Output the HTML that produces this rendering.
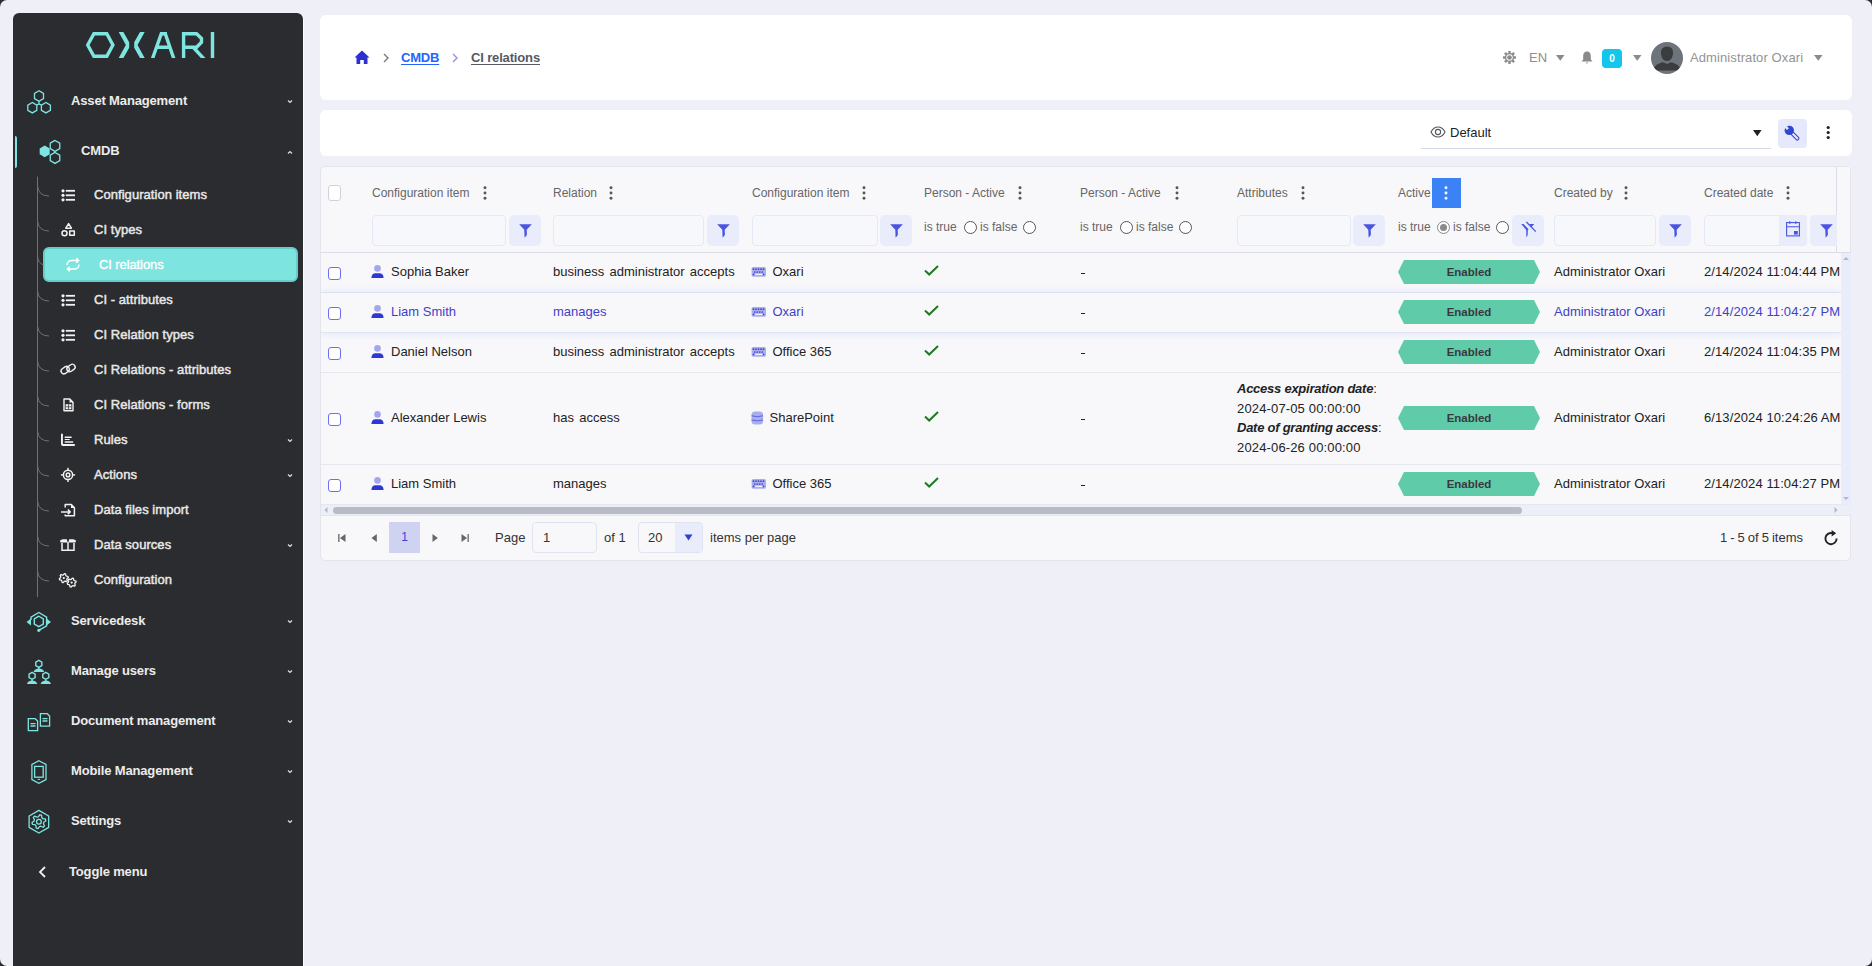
<!DOCTYPE html>
<html><head><meta charset="utf-8">
<style>
*{box-sizing:border-box;margin:0;padding:0}
html,body{width:1872px;height:966px;overflow:hidden;background:#2b2c2f}
body{font-family:"Liberation Sans",sans-serif;font-size:13px;color:#222;position:relative}
.page{position:absolute;left:0;top:0;width:1872px;height:966px;background:#eeeff7;border-radius:7px;overflow:hidden}
.a{position:absolute;white-space:nowrap}
.t{position:absolute;white-space:nowrap;line-height:16px;height:16px}
.sb{position:absolute;left:13px;top:13px;width:290px;height:960px;background:#2b2c2f;border-radius:6px;box-shadow:1px 0 0 #fbfbfe}
.mi{position:absolute;font-weight:bold;color:#ececec;font-size:13px;letter-spacing:-0.15px;line-height:16px;white-space:nowrap}
.si{position:absolute;font-weight:bold;color:#e8e8e8;font-size:13px;letter-spacing:-0.45px;line-height:16px;white-space:nowrap}
.card{position:absolute;background:#fff;border-radius:6px}

</style></head><body>
<div class="page">
<div class="sb"></div>
<div class="a" style="left:15px;top:136px;width:2.3px;height:32px;background:#7ee5e1;border-radius:0 2px 2px 0"></div>

<div class="a" style="left:43px;top:247px;width:255px;height:35px;background:#7ee4e0;border:2px solid #68cbc7;border-radius:6px"></div>
<div class="mi" style="left:71px;top:93px">Asset Management</div>
<div class="mi" style="left:71px;top:613px">Servicedesk</div>
<div class="mi" style="left:71px;top:663px">Manage users</div>
<div class="mi" style="left:71px;top:713px">Document management</div>
<div class="mi" style="left:71px;top:763px">Mobile Management</div>
<div class="mi" style="left:71px;top:813px">Settings</div>
<div class="mi" style="left:81px;top:143px">CMDB</div>
<div class="mi" style="left:69px;top:864px">Toggle menu</div>
<div class="si" style="left:94px;top:187px;color:#e8e8e8;font-weight:normal;-webkit-text-stroke:0.45px currentColor;letter-spacing:0.05px">Configuration items</div>
<div class="si" style="left:94px;top:222px;color:#e8e8e8;font-weight:normal;-webkit-text-stroke:0.45px currentColor;letter-spacing:0.05px">CI types</div>
<div class="si" style="left:99px;top:257px;color:#ffffff;font-weight:normal;-webkit-text-stroke:0.35px currentColor;letter-spacing:-0.1px">CI relations</div>
<div class="si" style="left:94px;top:292px;color:#e8e8e8;font-weight:normal;-webkit-text-stroke:0.45px currentColor;letter-spacing:0.05px">CI - attributes</div>
<div class="si" style="left:94px;top:327px;color:#e8e8e8;font-weight:normal;-webkit-text-stroke:0.45px currentColor;letter-spacing:0.05px">CI Relation types</div>
<div class="si" style="left:94px;top:362px;color:#e8e8e8;font-weight:normal;-webkit-text-stroke:0.45px currentColor;letter-spacing:0.05px">CI Relations - attributes</div>
<div class="si" style="left:94px;top:397px;color:#e8e8e8;font-weight:normal;-webkit-text-stroke:0.45px currentColor;letter-spacing:0.05px">CI Relations - forms</div>
<div class="si" style="left:94px;top:432px;color:#e8e8e8;font-weight:normal;-webkit-text-stroke:0.45px currentColor;letter-spacing:0.05px">Rules</div>
<div class="si" style="left:94px;top:467px;color:#e8e8e8;font-weight:normal;-webkit-text-stroke:0.45px currentColor;letter-spacing:0.05px">Actions</div>
<div class="si" style="left:94px;top:502px;color:#e8e8e8;font-weight:normal;-webkit-text-stroke:0.45px currentColor;letter-spacing:0.05px">Data files import</div>
<div class="si" style="left:94px;top:537px;color:#e8e8e8;font-weight:normal;-webkit-text-stroke:0.45px currentColor;letter-spacing:0.05px">Data sources</div>
<div class="si" style="left:94px;top:572px;color:#e8e8e8;font-weight:normal;-webkit-text-stroke:0.45px currentColor;letter-spacing:0.05px">Configuration</div>
<svg class="a" style="left:0;top:0" width="320" height="966" viewBox="0 0 320 966"><defs><clipPath id="lc"><rect x="80" y="32" width="140" height="26"/></clipPath></defs><g clip-path="url(#lc)"><g stroke="#7ee5e1" stroke-width="3.4" fill="none"><polygon points="87.7,45 93.9,33.7 106.8,33.7 112.9,45 106.8,56.3 93.9,56.3"/><path d="M152,60 L162.6,30 M164,30 L174.3,60 M155.5,47.2 H171"/><path d="M160,33.7 H167" /><path d="M183.6,60 V33.7 H196.6 L201.5,38.4 V42.2 L196.6,47.2 H183.6 M192.5,46.5 L205,60"/><path d="M212.5,30 V60"/></g><g fill="#7ee5e1"><polygon points="118.7,32 123.4,32 129.2,42.3 129.2,47.7 123.4,58 118.7,58 125.85,45"/><polygon points="144.7,32 140,32 134.2,42.3 134.2,47.7 140,58 144.7,58 137.55,45"/></g></g><g stroke="#7ee5e1" stroke-width="1.3" fill="none"><polygon points="39.00,90.80 34.50,93.40 34.50,98.60 39.00,101.20 43.50,98.60 43.50,93.40"/><polygon points="32.30,102.50 27.80,105.10 27.80,110.30 32.30,112.90 36.80,110.30 36.80,105.10"/><polygon points="45.90,102.50 41.40,105.10 41.40,110.30 45.90,112.90 50.40,110.30 50.40,105.10"/><path d="M39,101.2 V104 M36.8,105 Q39,103.4 41.2,105"/></g><polygon points="44.70,145.60 39.68,148.50 39.68,154.30 44.70,157.20 49.72,154.30 49.72,148.50" fill="#7ee5e1"/><g stroke="#7ee5e1" stroke-width="1.3" fill="none"><polygon points="55.00,140.40 50.24,143.15 50.24,148.65 55.00,151.40 59.76,148.65 59.76,143.15"/><polygon points="55.00,152.40 50.24,155.15 50.24,160.65 55.00,163.40 59.76,160.65 59.76,155.15"/></g><path d="M37.5,176.5 V597 M37.5,186 Q38.5,196 49,196 M37.5,221 Q38.5,231 49,231 M37.5,256 Q38,263 43.5,265 M37.5,291 Q38.5,301 49,301 M37.5,326 Q38.5,336 49,336 M37.5,361 Q38.5,371 49,371 M37.5,396 Q38.5,406 49,406 M37.5,431 Q38.5,441 49,441 M37.5,466 Q38.5,476 49,476 M37.5,501 Q38.5,511 49,511 M37.5,536 Q38.5,546 49,546 M37.5,571 Q38.5,581 49,581" stroke="#707173" stroke-width="1" fill="none"/><path d="M288,100.5 L290,102.5 L292,100.5 M288,439.5 L290,441.5 L292,439.5 M288,474.5 L290,476.5 L292,474.5 M288,544.5 L290,546.5 L292,544.5 M288,620.5 L290,622.5 L292,620.5 M288,670.5 L290,672.5 L292,670.5 M288,720.5 L290,722.5 L292,720.5 M288,770.5 L290,772.5 L292,770.5 M288,820.5 L290,822.5 L292,820.5 M288,153.5 L290,151.5 L292,153.5" stroke="#e0e0e0" stroke-width="1.2" fill="none"/><path d="M45,867 L40,872 L45,877" stroke="#f0f0f0" stroke-width="1.8" fill="none"/><circle cx="63" cy="190.8" r="1.6" fill="#f2f2f2"/><rect x="65.8" y="189.9" width="9.2" height="1.8" fill="#f2f2f2"/><circle cx="63" cy="195.3" r="1.6" fill="#f2f2f2"/><rect x="65.8" y="194.4" width="9.2" height="1.8" fill="#f2f2f2"/><circle cx="63" cy="199.8" r="1.6" fill="#f2f2f2"/><rect x="65.8" y="198.9" width="9.2" height="1.8" fill="#f2f2f2"/><circle cx="63" cy="295.8" r="1.6" fill="#f2f2f2"/><rect x="65.8" y="294.90000000000003" width="9.2" height="1.8" fill="#f2f2f2"/><circle cx="63" cy="300.3" r="1.6" fill="#f2f2f2"/><rect x="65.8" y="299.40000000000003" width="9.2" height="1.8" fill="#f2f2f2"/><circle cx="63" cy="304.8" r="1.6" fill="#f2f2f2"/><rect x="65.8" y="303.90000000000003" width="9.2" height="1.8" fill="#f2f2f2"/><circle cx="63" cy="330.8" r="1.6" fill="#f2f2f2"/><rect x="65.8" y="329.90000000000003" width="9.2" height="1.8" fill="#f2f2f2"/><circle cx="63" cy="335.3" r="1.6" fill="#f2f2f2"/><rect x="65.8" y="334.40000000000003" width="9.2" height="1.8" fill="#f2f2f2"/><circle cx="63" cy="339.8" r="1.6" fill="#f2f2f2"/><rect x="65.8" y="338.90000000000003" width="9.2" height="1.8" fill="#f2f2f2"/><g stroke="#f2f2f2" stroke-width="1.5" fill="none" stroke-linejoin="round"><path d="M68.6,223.6 L71.4,228.2 H65.8 Z"/><circle cx="64.5" cy="233.3" r="2.5"/><rect x="69.7" y="231" width="4.6" height="4.3"/></g><g stroke="#ffffff" stroke-width="1.5" fill="none"><path d="M67,265 A4.6,4.6 0 0 1 71.6,260.6 H78.5 M76.3,258.4 L78.6,260.6 L76.3,262.8"/><path d="M79,264.5 A4.6,4.6 0 0 1 74.4,269 H67.5 M69.7,266.8 L67.4,269 L69.7,271.2"/></g><g stroke="#f2f2f2" stroke-width="1.4" fill="none"><rect x="60.8" y="367.3" width="8.8" height="5.6" rx="2.8" transform="rotate(-35 65.2 370.1)"/><rect x="66.6" y="365.2" width="8.8" height="5.6" rx="2.8" transform="rotate(-35 71 368)"/></g><g stroke="#f2f2f2" stroke-width="1.4" fill="none" stroke-linejoin="round"><path d="M64,399 H69.8 L73,402.2 V410.8 H64 Z"/></g><g fill="#f2f2f2"><path d="M69.5,398.5 V402.5 H73.5 Z"/><rect x="65.6" y="404.3" width="5.8" height="5" rx="0.3"/></g><g stroke="#2b2c2f" stroke-width="0.7"><path d="M65.6,406.8 H71.4 M68.5,404.3 V409.3"/></g><g fill="#f2f2f2"><path d="M61,433.7 H62.9 V443.4 Q62.9,444 63.5,444 H74.8 V445.9 H63 Q61,445.9 61,444 Z"/><rect x="64.6" y="436.5" width="7.1" height="1.4" rx="0.5"/><rect x="64.6" y="438.9" width="5.2" height="1.2" rx="0.5"/><rect x="64.6" y="441.3" width="8.6" height="1.4" rx="0.5"/></g><g stroke="#f2f2f2" stroke-width="1.5" fill="none"><circle cx="68" cy="474.9" r="4.6"/><circle cx="68" cy="474.9" r="1.8"/></g><g fill="#f2f2f2"><rect x="67.3" y="467.8" width="1.4" height="2.6"/><rect x="67.3" y="479.4" width="1.4" height="2.6"/><rect x="60.9" y="474.2" width="2.6" height="1.4"/><rect x="72.5" y="474.2" width="2.6" height="1.4"/></g><g stroke="#f2f2f2" stroke-width="1.5" fill="none" stroke-linejoin="round"><path d="M65.2,507.5 V504.6 H71.3 L74.4,507.7 V515.8 H65.2 V514.5"/><path d="M61,511.9 H70.2 M67.8,509.5 L70.2,511.9 L67.8,514.3"/></g><path d="M71,504.2 V508 H74.8 Z" fill="#f2f2f2"/><g fill="#f2f2f2"><path d="M60,540.6 L62.5,539.2 H66.8 L67.6,542.5 H60.5 Z"/><path d="M76,540.6 L73.5,539.2 H69.2 L68.4,542.5 H75.5 Z"/></g><g stroke="#f2f2f2" stroke-width="1.5" fill="none"><path d="M62,543 V550.3 H74 V543"/><path d="M68,542 V550.5"/></g><g stroke="#f2f2f2" stroke-width="1.3" fill="none" stroke-linejoin="round"><polygon points="64.39,573.64 65.52,573.94 65.81,575.48 66.42,576.09 67.96,576.38 68.26,577.51 67.07,578.53 66.85,579.36 67.37,580.84 66.54,581.67 65.06,581.15 64.23,581.37 63.21,582.56 62.08,582.26 61.79,580.72 61.18,580.11 59.64,579.82 59.34,578.69 60.53,577.67 60.75,576.84 60.23,575.36 61.06,574.53 62.54,575.05 63.37,574.83"/><polygon points="72.29,578.14 73.42,578.44 73.71,579.98 74.32,580.59 75.86,580.88 76.16,582.01 74.97,583.03 74.75,583.86 75.27,585.34 74.44,586.17 72.96,585.65 72.13,585.87 71.11,587.06 69.98,586.76 69.69,585.22 69.08,584.61 67.54,584.32 67.24,583.19 68.43,582.17 68.65,581.34 68.13,579.86 68.96,579.03 70.44,579.55 71.27,579.33"/></g><g fill="#f2f2f2"><circle cx="63.8" cy="578.1" r="1.1"/><circle cx="71.7" cy="582.6" r="1.1"/></g><g stroke="#7ee5e1" stroke-width="1.4" fill="none"><path d="M31,620 V617.2 L38.8,612.5 L46.6,617.2 V625.8 L38.8,630.3"/><polygon points="38.80,616.20 34.30,618.80 34.30,624.00 38.80,626.60 43.30,624.00 43.30,618.80"/></g><g fill="#7ee5e1"><path d="M26.5,622 L31,618.5 V625.5 Z"/><path d="M51,622 L46.5,618.5 V625.5 Z"/><circle cx="38.8" cy="630.3" r="1.6"/></g><g stroke="#7ee5e1" stroke-width="1.4" fill="none"><polygon points="38.80,660.40 35.77,662.15 35.77,665.65 38.80,667.40 41.83,665.65 41.83,662.15"/><polygon points="32.10,672.30 29.07,674.05 29.07,677.55 32.10,679.30 35.13,677.55 35.13,674.05"/><polygon points="45.80,672.30 42.77,674.05 42.77,677.55 45.80,679.30 48.83,677.55 48.83,674.05"/><path d="M38.8,667.4 V669 M32.1,679.3 V681 M45.8,679.3 V681"/></g><g fill="#7ee5e1"><path d="M33.60,672 C34.40,669.4 36.90,668.6 38.90,668.6 C40.90,668.6 43.40,669.4 44.20,672 Z"/><path d="M26.90,684 C27.70,681.4 30.10,680.6 32.10,680.6 C34.10,680.6 36.50,681.4 37.30,684 Z"/><path d="M40.60,684 C41.40,681.4 43.80,680.6 45.80,680.6 C47.80,680.6 50.20,681.4 51.00,684 Z"/></g><g stroke="#7ee5e1" stroke-width="1.3" fill="none"><path d="M28.3,718.7 H35.3 L37.6,721 V730.6 H28.3 Z"/><path d="M40.4,713.7 H47.3 L49.6,716 V726.2 H40.4 Z"/><path d="M30.5,723.6 H35.5 M30.5,726 H35.5 M42.5,718.6 H47.5 M42.5,721 H47.5"/></g><g stroke="#7ee5e1" stroke-width="1.3" fill="none"><path d="M38.9,760.7 L46,764.5 V779.5 L38.9,783.3 L31.9,779.5 V764.5 Z"/><rect x="34.6" y="766.4" width="8.6" height="10.8"/></g><rect x="37.7" y="778.9" width="2.4" height="1" fill="#7ee5e1"/><g stroke="#7ee5e1" stroke-width="1.3" fill="none" stroke-linejoin="round"><polygon points="38.90,810.40 29.11,816.05 29.11,827.35 38.90,833.00 48.69,827.35 48.69,816.05"/><polygon points="39.81,814.76 41.58,815.23 41.88,817.81 42.79,818.72 45.37,819.02 45.84,820.79 43.76,822.34 43.43,823.58 44.45,825.96 43.16,827.25 40.78,826.23 39.54,826.56 37.99,828.64 36.22,828.17 35.92,825.59 35.01,824.68 32.43,824.38 31.96,822.61 34.04,821.06 34.37,819.82 33.35,817.44 34.64,816.15 37.02,817.17 38.26,816.84"/><circle cx="38.9" cy="821.7" r="2.4"/></g></svg>
<div class="card" style="left:320px;top:15px;width:1532px;height:85px"></div>
<svg class="a" style="left:354px;top:50px" width="16" height="15" viewBox="0 0 16 15"><path d="M8,0.5 L15.5,7.5 H13.5 V14 H9.8 V10 H6.2 V14 H2.5 V7.5 H0.5 Z" fill="#2d2fcf"/></svg>
<svg class="a" style="left:382px;top:53px" width="8" height="10"><path d="M2,1 L6,5 L2,9" stroke="#7a7a7a" stroke-width="1.4" fill="none"/></svg>
<div class="t" style="left:401px;top:50px;font-weight:bold;color:#2563ff;text-decoration:underline;text-underline-offset:2px;letter-spacing:-0.2px">CMDB</div>
<svg class="a" style="left:451px;top:53px" width="8" height="10"><path d="M2,1 L6,5 L2,9" stroke="#9090ee" stroke-width="1.4" fill="none"/></svg>
<div class="t" style="left:471px;top:50px;font-weight:bold;color:#555a66;text-decoration:underline;text-underline-offset:2px;letter-spacing:-0.15px">CI relations</div>
<svg class="a" style="left:1503px;top:50.5px" width="13" height="13" viewBox="0 0 13 13"><g fill="#8a8a8a"><rect x="5.3" y="0" width="2.4" height="3" transform="rotate(0 6.5 6.5)"/><rect x="5.3" y="0" width="2.4" height="3" transform="rotate(45 6.5 6.5)"/><rect x="5.3" y="0" width="2.4" height="3" transform="rotate(90 6.5 6.5)"/><rect x="5.3" y="0" width="2.4" height="3" transform="rotate(135 6.5 6.5)"/><rect x="5.3" y="0" width="2.4" height="3" transform="rotate(180 6.5 6.5)"/><rect x="5.3" y="0" width="2.4" height="3" transform="rotate(225 6.5 6.5)"/><rect x="5.3" y="0" width="2.4" height="3" transform="rotate(270 6.5 6.5)"/><rect x="5.3" y="0" width="2.4" height="3" transform="rotate(315 6.5 6.5)"/><circle cx="6.5" cy="6.5" r="4.6"/></g><circle cx="6.5" cy="6.5" r="3.2" fill="#fff"/><circle cx="6.5" cy="6.5" r="2.3" fill="#8a8a8a"/></svg>
<div class="t" style="left:1529px;top:50px;color:#8d8d8d;font-size:13px">EN</div>
<svg class="a" style="left:1556px;top:55px" width="9" height="6"><path d="M0,0 H8.5 L4.25,5.8 Z" fill="#8a8a8a"/></svg>
<svg class="a" style="left:1581px;top:51px" width="12" height="13" viewBox="0 0 12 13"><path d="M6,0.5 C9,0.5 9.8,3 9.8,5.5 V8.5 L11.5,10.5 H0.5 L2.2,8.5 V5.5 C2.2,3 3,0.5 6,0.5 Z" fill="#8a8a8a"/><path d="M4.5,11.5 H7.5 L6,12.8 Z" fill="#8a8a8a"/></svg>
<div class="a" style="left:1602px;top:49px;width:20px;height:19px;background:#13c6ea;border-radius:4px;color:#fff;font-weight:bold;font-size:10px;line-height:19px;text-align:center">0</div>
<svg class="a" style="left:1632.5px;top:55px" width="9" height="6"><path d="M0,0 H8.5 L4.25,5.8 Z" fill="#8a8a8a"/></svg>
<svg class="a" style="left:1651px;top:42px" width="32" height="32" viewBox="0 0 32 32"><defs><clipPath id="av"><circle cx="16" cy="16" r="16"/></clipPath></defs><circle cx="16" cy="16" r="16" fill="#6e747c"/><g clip-path="url(#av)" fill="#3b3c3e"><path d="M16,4.5 C20.5,4.5 22.3,7.5 22,11.5 C21.7,15.5 19.7,19 16,19 C12.3,19 10.3,15.5 10,11.5 C9.7,7.5 11.5,4.5 16,4.5 Z"/><path d="M2,28.5 C3,24 6.5,21.5 12,20.3 L16,22 L20,20.3 C25.5,21.5 29,24 30,28.5 Z"/></g></svg>
<div class="t" style="left:1690px;top:50px;color:#939393;font-size:13px;letter-spacing:0.1px">Administrator Oxari</div>
<svg class="a" style="left:1813.5px;top:55px" width="9" height="6"><path d="M0,0 H8.5 L4.25,5.8 Z" fill="#8a8a8a"/></svg>
<div class="card" style="left:320px;top:110px;width:1532px;height:46px"></div>
<div class="a" style="left:1421px;top:147.5px;width:350px;height:1px;background:#d8dbe6"></div>
<svg class="a" style="left:1430px;top:126px" width="16" height="12" viewBox="0 0 16 12"><path d="M1,6 C3,2 5.5,1 8,1 C10.5,1 13,2 15,6 C13,10 10.5,11 8,11 C5.5,11 3,10 1,6 Z" stroke="#555" stroke-width="1.1" fill="none"/><circle cx="8" cy="6" r="2.6" stroke="#555" stroke-width="1.1" fill="none"/></svg>
<div class="t" style="left:1450px;top:125px;color:#222;font-size:13px">Default</div>
<svg class="a" style="left:1753px;top:129.5px" width="9" height="7"><path d="M0,0 H8.6 L4.3,6.2 Z" fill="#222"/></svg>
<div class="a" style="left:1778px;top:119px;width:29px;height:29px;background:#e6e9fb;border-radius:4px"></div>
<svg class="a" style="left:1782px;top:123px" width="20" height="20" viewBox="0 0 20 20"><g transform="translate(7.3 7.4) rotate(45)"><rect x="3.5" y="-1.55" width="9.3" height="3.1" rx="1.3" fill="none" stroke="#2f46d9" stroke-width="1.1"/><circle cx="0" cy="0" r="4.7" fill="#2f46d9"/><rect x="-5.2" y="-1.3" width="3.3" height="2.6" fill="#e6e9fb"/></g></svg>
<svg class="a" style="left:1826px;top:125px" width="4" height="15"><g fill="#222"><circle cx="2.2" cy="2.5" r="1.6"/><circle cx="2.2" cy="7.5" r="1.6"/><circle cx="2.2" cy="12.5" r="1.6"/></g></svg>
<div class="a" style="left:320px;top:166px;width:1531px;height:395px;background:#f8f8fb;border:1px solid #e3e4ec;border-radius:5px;overflow:hidden"></div>
<div class="a" style="left:321px;top:252px;width:1530px;height:1px;background:#dcdde6"></div>
<div class="a" style="left:1836px;top:167px;width:1px;height:85px;background:#dcdde6"></div>
<div class="a" style="left:328px;top:185px;width:13px;height:16px;border:1px solid #d0d2da;border-radius:3px;background:#fff"></div>
<div class="t" style="left:372px;top:185px;color:#666;font-size:12px">Configuration item</div>
<svg class="a" style="left:482.5px;top:185.5px" width="4" height="14"><g fill="#555"><circle cx="2" cy="1.8" r="1.45"/><circle cx="2" cy="7" r="1.45"/><circle cx="2" cy="12.2" r="1.45"/></g></svg>
<div class="t" style="left:553px;top:185px;color:#666;font-size:12px">Relation</div>
<svg class="a" style="left:609px;top:185.5px" width="4" height="14"><g fill="#555"><circle cx="2" cy="1.8" r="1.45"/><circle cx="2" cy="7" r="1.45"/><circle cx="2" cy="12.2" r="1.45"/></g></svg>
<div class="t" style="left:752px;top:185px;color:#666;font-size:12px">Configuration item</div>
<svg class="a" style="left:862px;top:185.5px" width="4" height="14"><g fill="#555"><circle cx="2" cy="1.8" r="1.45"/><circle cx="2" cy="7" r="1.45"/><circle cx="2" cy="12.2" r="1.45"/></g></svg>
<div class="t" style="left:924px;top:185px;color:#666;font-size:12px">Person - Active</div>
<svg class="a" style="left:1018px;top:185.5px" width="4" height="14"><g fill="#555"><circle cx="2" cy="1.8" r="1.45"/><circle cx="2" cy="7" r="1.45"/><circle cx="2" cy="12.2" r="1.45"/></g></svg>
<div class="t" style="left:1080px;top:185px;color:#666;font-size:12px">Person - Active</div>
<svg class="a" style="left:1174.5px;top:185.5px" width="4" height="14"><g fill="#555"><circle cx="2" cy="1.8" r="1.45"/><circle cx="2" cy="7" r="1.45"/><circle cx="2" cy="12.2" r="1.45"/></g></svg>
<div class="t" style="left:1237px;top:185px;color:#666;font-size:12px">Attributes</div>
<svg class="a" style="left:1301px;top:185.5px" width="4" height="14"><g fill="#555"><circle cx="2" cy="1.8" r="1.45"/><circle cx="2" cy="7" r="1.45"/><circle cx="2" cy="12.2" r="1.45"/></g></svg>
<div class="t" style="left:1398px;top:185px;color:#666;font-size:12px">Active</div>
<div class="t" style="left:1554px;top:185px;color:#666;font-size:12px">Created by</div>
<svg class="a" style="left:1624px;top:185.5px" width="4" height="14"><g fill="#555"><circle cx="2" cy="1.8" r="1.45"/><circle cx="2" cy="7" r="1.45"/><circle cx="2" cy="12.2" r="1.45"/></g></svg>
<div class="t" style="left:1704px;top:185px;color:#666;font-size:12px">Created date</div>
<svg class="a" style="left:1786px;top:185.5px" width="4" height="14"><g fill="#555"><circle cx="2" cy="1.8" r="1.45"/><circle cx="2" cy="7" r="1.45"/><circle cx="2" cy="12.2" r="1.45"/></g></svg>
<div class="a" style="left:1432px;top:178px;width:29px;height:30px;background:#3b82f6"></div>
<svg class="a" style="left:1444px;top:185.5px" width="4" height="14"><g fill="#fff"><circle cx="2" cy="1.8" r="1.45"/><circle cx="2" cy="7" r="1.45"/><circle cx="2" cy="12.2" r="1.45"/></g></svg>
<div class="a" style="left:372px;top:215px;width:134px;height:31px;border:1px solid #e4e8f8;border-radius:4px;background:#f7f8fb"></div>
<div class="a" style="left:509px;top:215px;width:32px;height:31px;background:#e8ecfb;border-radius:5px"></div><svg class="a" style="left:519px;top:224px" width="13" height="14" viewBox="0 0 13 14"><path d="M0.2,0.3 H12.8 L7.7,5.8 L7.9,11 L5.6,13.8 L5.3,5.8 Z" fill="#4a54e1"/></svg>
<div class="a" style="left:553px;top:215px;width:151px;height:31px;border:1px solid #e4e8f8;border-radius:4px;background:#f7f8fb"></div>
<div class="a" style="left:707px;top:215px;width:32px;height:31px;background:#e8ecfb;border-radius:5px"></div><svg class="a" style="left:717px;top:224px" width="13" height="14" viewBox="0 0 13 14"><path d="M0.2,0.3 H12.8 L7.7,5.8 L7.9,11 L5.6,13.8 L5.3,5.8 Z" fill="#4a54e1"/></svg>
<div class="a" style="left:752px;top:215px;width:126px;height:31px;border:1px solid #e4e8f8;border-radius:4px;background:#f7f8fb"></div>
<div class="a" style="left:880px;top:215px;width:32px;height:31px;background:#e8ecfb;border-radius:5px"></div><svg class="a" style="left:890px;top:224px" width="13" height="14" viewBox="0 0 13 14"><path d="M0.2,0.3 H12.8 L7.7,5.8 L7.9,11 L5.6,13.8 L5.3,5.8 Z" fill="#4a54e1"/></svg>
<div class="a" style="left:1237px;top:215px;width:114px;height:31px;border:1px solid #e4e8f8;border-radius:4px;background:#f7f8fb"></div>
<div class="a" style="left:1353px;top:215px;width:32px;height:31px;background:#e8ecfb;border-radius:5px"></div><svg class="a" style="left:1363px;top:224px" width="13" height="14" viewBox="0 0 13 14"><path d="M0.2,0.3 H12.8 L7.7,5.8 L7.9,11 L5.6,13.8 L5.3,5.8 Z" fill="#4a54e1"/></svg>
<div class="a" style="left:1554px;top:215px;width:102px;height:31px;border:1px solid #e4e8f8;border-radius:4px;background:#f7f8fb"></div>
<div class="a" style="left:1659px;top:215px;width:32px;height:31px;background:#e8ecfb;border-radius:5px"></div><svg class="a" style="left:1669px;top:224px" width="13" height="14" viewBox="0 0 13 14"><path d="M0.2,0.3 H12.8 L7.7,5.8 L7.9,11 L5.6,13.8 L5.3,5.8 Z" fill="#4a54e1"/></svg>
<div class="a" style="left:1704px;top:215px;width:103px;height:31px;border:1px solid #e4e8f8;border-radius:4px;background:#f7f8fb"></div>
<div class="a" style="left:1779px;top:215px;width:28px;height:31px;background:#e8ecfb;border-radius:0 4px 4px 0"></div>
<svg class="a" style="left:1786px;top:221px" width="14" height="16" viewBox="0 0 14 16"><g fill="none" stroke="#4a54e1" stroke-width="1.1"><rect x="0.6" y="1.6" width="12.8" height="13.3"/><path d="M0.6,5.8 H13.4"/></g><rect x="3" y="0.3" width="1.6" height="2.6" rx="0.8" fill="#4a54e1"/><rect x="9" y="0.3" width="1.6" height="2.6" rx="0.8" fill="#4a54e1"/><rect x="8" y="10" width="3.8" height="3.6" fill="#4a54e1"/></svg>
<div class="a" style="left:1810px;top:215px;width:32px;height:31px;background:#e8ecfb;border-radius:5px"></div><svg class="a" style="left:1820px;top:224px" width="13" height="14" viewBox="0 0 13 14"><path d="M0.2,0.3 H12.8 L7.7,5.8 L7.9,11 L5.6,13.8 L5.3,5.8 Z" fill="#4a54e1"/></svg>
<div class="a" style="left:1837px;top:167px;width:13px;height:85px;background:#f8f8fb"></div>
<div class="a" style="left:1512px;top:215px;width:32px;height:31px;background:#e8ecfb;border-radius:5px"></div>
<svg class="a" style="left:1520px;top:221px" width="17" height="17" viewBox="0 0 17 17"><path d="M1.3,3 H3.5 L8.6,8.2 L7.8,9 L7.7,14 L6.4,16.5 L6.2,9 Z" fill="#4a54e1"/><path d="M9.6,3 H14.3 L11.3,6.2 Z" fill="#4a54e1"/><path d="M6.4,1 L15.8,10.6" stroke="#4a54e1" stroke-width="1.3"/></svg>
<div class="t" style="left:924px;top:219px;color:#666;font-size:12px">is true</div>
<div class="a" style="left:964px;top:221px;width:13px;height:13px;border:1px solid #555;border-radius:50%;background:#fff"></div>
<div class="t" style="left:980px;top:219px;color:#666;font-size:12px">is false</div>
<div class="a" style="left:1023px;top:221px;width:13px;height:13px;border:1px solid #555;border-radius:50%;background:#fff"></div>
<div class="t" style="left:1080px;top:219px;color:#666;font-size:12px">is true</div>
<div class="a" style="left:1120px;top:221px;width:13px;height:13px;border:1px solid #555;border-radius:50%;background:#fff"></div>
<div class="t" style="left:1136px;top:219px;color:#666;font-size:12px">is false</div>
<div class="a" style="left:1179px;top:221px;width:13px;height:13px;border:1px solid #555;border-radius:50%;background:#fff"></div>
<div class="t" style="left:1398px;top:219px;color:#666;font-size:12px">is true</div>
<div class="a" style="left:1437px;top:221px;width:13px;height:13px;border:1px solid #888;border-radius:50%;background:#fff"></div><div class="a" style="left:1440px;top:224px;width:7px;height:7px;border-radius:50%;background:#8a8a8a"></div>
<div class="t" style="left:1453px;top:219px;color:#666;font-size:12px">is false</div>
<div class="a" style="left:1496px;top:221px;width:13px;height:13px;border:1px solid #555;border-radius:50%;background:#fff"></div>
<div class="a" style="left:321px;top:253px;width:1520px;height:252px;overflow:hidden">
<div class="a" style="left:0;top:0px;width:1520px;height:40px;border-bottom:1px solid #e6e7ef"></div>
<div class="a" style="left:7px;top:13.5px;width:13px;height:13px;border:1.3px solid #6b6ef0;border-radius:3px;background:#fff"></div>
<svg class="a" style="left:50px;top:12.0px" width="14" height="14" viewBox="0 0 14 14"><circle cx="6.5" cy="3.4" r="3.3" fill="#a3a6ec"/><path d="M0.4,12.9 C0.4,10 2,8.3 4.5,8.3 H8.5 C11,8.3 12.6,10 12.6,12.9 Z" fill="#2e36d6"/></svg>
<div class="t" style="left:70px;top:11.0px;color:#222;word-spacing:0px">Sophia Baker</div>
<div class="t" style="left:232px;top:11.0px;color:#222;word-spacing:1.6px">business administrator accepts</div>
<svg class="a" style="left:430px;top:12.5px" width="16" height="12" viewBox="0 0 16 12"><rect x="0.6" y="0.9" width="14.4" height="9.8" rx="1.6" fill="#aaaeeb"/><g fill="#3c42d8"><circle cx="2.5" cy="3.2" r="0.85"/><circle cx="5" cy="3.2" r="0.85"/><circle cx="7.5" cy="3.2" r="0.85"/><circle cx="10" cy="3.2" r="0.85"/><circle cx="12.5" cy="3.2" r="0.85"/><circle cx="3.7" cy="6" r="0.85"/><circle cx="6.2" cy="6" r="0.85"/><circle cx="8.7" cy="6" r="0.85"/><circle cx="11.2" cy="6" r="0.85"/><circle cx="2.5" cy="8.4" r="0.85"/><circle cx="12.5" cy="8.4" r="0.85"/></g><rect x="4.2" y="7.8" width="7.2" height="1.2" fill="#f3f3fc"/></svg>
<div class="t" style="left:451.5px;top:11.0px;color:#222;word-spacing:0px">Oxari</div>
<svg class="a" style="left:603px;top:12.0px" width="15" height="11" viewBox="0 0 15 11"><path d="M1,5.5 L5.2,9.5 L14,1" stroke="#1d7a22" stroke-width="2" fill="none"/></svg>
<div class="a" style="left:760px;top:19.5px;width:4px;height:1.3px;background:#222"></div>
<svg class="a" style="left:1077px;top:7.0px" width="142" height="24" viewBox="0 0 142 24"><path d="M6,0 H136 L142,12 L136,24 H6 L0,12 Z" fill="#5fcba9"/></svg>
<div class="t" style="left:1077px;top:11.0px;width:142px;text-align:center;font-weight:bold;color:#3a383f;font-size:11.5px">Enabled</div>
<div class="t" style="left:1233px;top:11.0px;color:#222;word-spacing:0px">Administrator Oxari</div>
<div class="t" style="left:1383px;top:11.0px;color:#222;letter-spacing:0.1px">2/14/2024 11:04:44 PM</div>
<div class="a" style="left:0;top:40px;width:1520px;height:40px;border-bottom:1px solid #e6e7ef"></div>
<div class="a" style="left:0;top:40px;width:1520px;height:40px;background:#f8f8fb;box-shadow:0 0 8px rgba(170,185,245,0.35);border-bottom:1px solid #e3e5f2;z-index:0"></div>
<div class="a" style="left:7px;top:53.5px;width:13px;height:13px;border:1.3px solid #6b6ef0;border-radius:3px;background:#fff"></div>
<svg class="a" style="left:50px;top:52.0px" width="14" height="14" viewBox="0 0 14 14"><circle cx="6.5" cy="3.4" r="3.3" fill="#a3a6ec"/><path d="M0.4,12.9 C0.4,10 2,8.3 4.5,8.3 H8.5 C11,8.3 12.6,10 12.6,12.9 Z" fill="#2e36d6"/></svg>
<div class="t" style="left:70px;top:51.0px;color:#3f3fc9;word-spacing:0px">Liam Smith</div>
<div class="t" style="left:232px;top:51.0px;color:#3f3fc9;word-spacing:1.6px">manages</div>
<svg class="a" style="left:430px;top:52.5px" width="16" height="12" viewBox="0 0 16 12"><rect x="0.6" y="0.9" width="14.4" height="9.8" rx="1.6" fill="#aaaeeb"/><g fill="#3c42d8"><circle cx="2.5" cy="3.2" r="0.85"/><circle cx="5" cy="3.2" r="0.85"/><circle cx="7.5" cy="3.2" r="0.85"/><circle cx="10" cy="3.2" r="0.85"/><circle cx="12.5" cy="3.2" r="0.85"/><circle cx="3.7" cy="6" r="0.85"/><circle cx="6.2" cy="6" r="0.85"/><circle cx="8.7" cy="6" r="0.85"/><circle cx="11.2" cy="6" r="0.85"/><circle cx="2.5" cy="8.4" r="0.85"/><circle cx="12.5" cy="8.4" r="0.85"/></g><rect x="4.2" y="7.8" width="7.2" height="1.2" fill="#f3f3fc"/></svg>
<div class="t" style="left:451.5px;top:51.0px;color:#3f3fc9;word-spacing:0px">Oxari</div>
<svg class="a" style="left:603px;top:52.0px" width="15" height="11" viewBox="0 0 15 11"><path d="M1,5.5 L5.2,9.5 L14,1" stroke="#1d7a22" stroke-width="2" fill="none"/></svg>
<div class="a" style="left:760px;top:59.5px;width:4px;height:1.3px;background:#222"></div>
<svg class="a" style="left:1077px;top:47.0px" width="142" height="24" viewBox="0 0 142 24"><path d="M6,0 H136 L142,12 L136,24 H6 L0,12 Z" fill="#5fcba9"/></svg>
<div class="t" style="left:1077px;top:51.0px;width:142px;text-align:center;font-weight:bold;color:#3a383f;font-size:11.5px">Enabled</div>
<div class="t" style="left:1233px;top:51.0px;color:#3f3fc9;word-spacing:0px">Administrator Oxari</div>
<div class="t" style="left:1383px;top:51.0px;color:#3f3fc9;letter-spacing:0.1px">2/14/2024 11:04:27 PM</div>
<div class="a" style="left:0;top:80px;width:1520px;height:40px;border-bottom:1px solid #e6e7ef"></div>
<div class="a" style="left:7px;top:93.5px;width:13px;height:13px;border:1.3px solid #6b6ef0;border-radius:3px;background:#fff"></div>
<svg class="a" style="left:50px;top:92.0px" width="14" height="14" viewBox="0 0 14 14"><circle cx="6.5" cy="3.4" r="3.3" fill="#a3a6ec"/><path d="M0.4,12.9 C0.4,10 2,8.3 4.5,8.3 H8.5 C11,8.3 12.6,10 12.6,12.9 Z" fill="#2e36d6"/></svg>
<div class="t" style="left:70px;top:91.0px;color:#222;word-spacing:0px">Daniel Nelson</div>
<div class="t" style="left:232px;top:91.0px;color:#222;word-spacing:1.6px">business administrator accepts</div>
<svg class="a" style="left:430px;top:92.5px" width="16" height="12" viewBox="0 0 16 12"><rect x="0.6" y="0.9" width="14.4" height="9.8" rx="1.6" fill="#aaaeeb"/><g fill="#3c42d8"><circle cx="2.5" cy="3.2" r="0.85"/><circle cx="5" cy="3.2" r="0.85"/><circle cx="7.5" cy="3.2" r="0.85"/><circle cx="10" cy="3.2" r="0.85"/><circle cx="12.5" cy="3.2" r="0.85"/><circle cx="3.7" cy="6" r="0.85"/><circle cx="6.2" cy="6" r="0.85"/><circle cx="8.7" cy="6" r="0.85"/><circle cx="11.2" cy="6" r="0.85"/><circle cx="2.5" cy="8.4" r="0.85"/><circle cx="12.5" cy="8.4" r="0.85"/></g><rect x="4.2" y="7.8" width="7.2" height="1.2" fill="#f3f3fc"/></svg>
<div class="t" style="left:451.5px;top:91.0px;color:#222;word-spacing:0px">Office 365</div>
<svg class="a" style="left:603px;top:92.0px" width="15" height="11" viewBox="0 0 15 11"><path d="M1,5.5 L5.2,9.5 L14,1" stroke="#1d7a22" stroke-width="2" fill="none"/></svg>
<div class="a" style="left:760px;top:99.5px;width:4px;height:1.3px;background:#222"></div>
<svg class="a" style="left:1077px;top:87.0px" width="142" height="24" viewBox="0 0 142 24"><path d="M6,0 H136 L142,12 L136,24 H6 L0,12 Z" fill="#5fcba9"/></svg>
<div class="t" style="left:1077px;top:91.0px;width:142px;text-align:center;font-weight:bold;color:#3a383f;font-size:11.5px">Enabled</div>
<div class="t" style="left:1233px;top:91.0px;color:#222;word-spacing:0px">Administrator Oxari</div>
<div class="t" style="left:1383px;top:91.0px;color:#222;letter-spacing:0.1px">2/14/2024 11:04:35 PM</div>
<div class="a" style="left:0;top:120px;width:1520px;height:92px;border-bottom:1px solid #e6e7ef"></div>
<div class="a" style="left:7px;top:159.5px;width:13px;height:13px;border:1.3px solid #6b6ef0;border-radius:3px;background:#fff"></div>
<svg class="a" style="left:50px;top:158.0px" width="14" height="14" viewBox="0 0 14 14"><circle cx="6.5" cy="3.4" r="3.3" fill="#a3a6ec"/><path d="M0.4,12.9 C0.4,10 2,8.3 4.5,8.3 H8.5 C11,8.3 12.6,10 12.6,12.9 Z" fill="#2e36d6"/></svg>
<div class="t" style="left:70px;top:157.0px;color:#222;word-spacing:0px">Alexander Lewis</div>
<div class="t" style="left:232px;top:157.0px;color:#222;word-spacing:1.6px">has access</div>
<svg class="a" style="left:430px;top:158.0px" width="13" height="14" viewBox="0 0 13 14"><rect x="0.5" y="0.6" width="11.6" height="12.9" rx="3.5" fill="#aaaeeb"/><g stroke="#4a50dc" stroke-width="0.8" fill="none"><path d="M0.6,4.8 Q6.3,6.5 12,4.8 M0.6,9 Q6.3,10.7 12,9"/></g></svg>
<div class="t" style="left:448.5px;top:157.0px;color:#222;word-spacing:0px">SharePoint</div>
<svg class="a" style="left:603px;top:158.0px" width="15" height="11" viewBox="0 0 15 11"><path d="M1,5.5 L5.2,9.5 L14,1" stroke="#1d7a22" stroke-width="2" fill="none"/></svg>
<div class="a" style="left:760px;top:165.5px;width:4px;height:1.3px;background:#222"></div>
<svg class="a" style="left:1077px;top:153.0px" width="142" height="24" viewBox="0 0 142 24"><path d="M6,0 H136 L142,12 L136,24 H6 L0,12 Z" fill="#5fcba9"/></svg>
<div class="t" style="left:1077px;top:157.0px;width:142px;text-align:center;font-weight:bold;color:#3a383f;font-size:11.5px">Enabled</div>
<div class="t" style="left:1233px;top:157.0px;color:#222;word-spacing:0px">Administrator Oxari</div>
<div class="t" style="left:1383px;top:157.0px;color:#222;letter-spacing:0.1px">6/13/2024 10:24:26 AM</div>
<div class="a" style="left:0;top:212px;width:1520px;height:40px;border-bottom:1px solid #e6e7ef"></div>
<div class="a" style="left:7px;top:225.5px;width:13px;height:13px;border:1.3px solid #6b6ef0;border-radius:3px;background:#fff"></div>
<svg class="a" style="left:50px;top:224.0px" width="14" height="14" viewBox="0 0 14 14"><circle cx="6.5" cy="3.4" r="3.3" fill="#a3a6ec"/><path d="M0.4,12.9 C0.4,10 2,8.3 4.5,8.3 H8.5 C11,8.3 12.6,10 12.6,12.9 Z" fill="#2e36d6"/></svg>
<div class="t" style="left:70px;top:223.0px;color:#222;word-spacing:0px">Liam Smith</div>
<div class="t" style="left:232px;top:223.0px;color:#222;word-spacing:1.6px">manages</div>
<svg class="a" style="left:430px;top:224.5px" width="16" height="12" viewBox="0 0 16 12"><rect x="0.6" y="0.9" width="14.4" height="9.8" rx="1.6" fill="#aaaeeb"/><g fill="#3c42d8"><circle cx="2.5" cy="3.2" r="0.85"/><circle cx="5" cy="3.2" r="0.85"/><circle cx="7.5" cy="3.2" r="0.85"/><circle cx="10" cy="3.2" r="0.85"/><circle cx="12.5" cy="3.2" r="0.85"/><circle cx="3.7" cy="6" r="0.85"/><circle cx="6.2" cy="6" r="0.85"/><circle cx="8.7" cy="6" r="0.85"/><circle cx="11.2" cy="6" r="0.85"/><circle cx="2.5" cy="8.4" r="0.85"/><circle cx="12.5" cy="8.4" r="0.85"/></g><rect x="4.2" y="7.8" width="7.2" height="1.2" fill="#f3f3fc"/></svg>
<div class="t" style="left:451.5px;top:223.0px;color:#222;word-spacing:0px">Office 365</div>
<svg class="a" style="left:603px;top:224.0px" width="15" height="11" viewBox="0 0 15 11"><path d="M1,5.5 L5.2,9.5 L14,1" stroke="#1d7a22" stroke-width="2" fill="none"/></svg>
<div class="a" style="left:760px;top:231.5px;width:4px;height:1.3px;background:#222"></div>
<svg class="a" style="left:1077px;top:219.0px" width="142" height="24" viewBox="0 0 142 24"><path d="M6,0 H136 L142,12 L136,24 H6 L0,12 Z" fill="#5fcba9"/></svg>
<div class="t" style="left:1077px;top:223.0px;width:142px;text-align:center;font-weight:bold;color:#3a383f;font-size:11.5px">Enabled</div>
<div class="t" style="left:1233px;top:223.0px;color:#222;word-spacing:0px">Administrator Oxari</div>
<div class="t" style="left:1383px;top:223.0px;color:#222;letter-spacing:0.1px">2/14/2024 11:04:27 PM</div>
<div class="t" style="left:916px;top:128px;color:#222"><b style="letter-spacing:-0.25px"><i>Access expiration date</i></b>:</div>
<div class="t" style="left:916px;top:148px;color:#222;letter-spacing:0.15px">2024-07-05 00:00:00</div>
<div class="t" style="left:916px;top:167px;color:#222"><b style="letter-spacing:-0.25px"><i>Date of granting access</i></b>:</div>
<div class="t" style="left:916px;top:187px;color:#222;letter-spacing:0.15px">2024-06-26 00:00:00</div>
</div>
<div class="a" style="left:1841px;top:253px;width:10px;height:252px;background:#e8ecfb"></div>
<svg class="a" style="left:1841px;top:255px" width="10" height="6"><path d="M2,5 L5,2 L8,5 Z" fill="#b5b8c4"/></svg>
<svg class="a" style="left:1841px;top:496px" width="10" height="6"><path d="M2,1 L5,4 L8,1 Z" fill="#b5b8c4"/></svg>
<div class="a" style="left:321px;top:505px;width:1530px;height:10px;background:#eceef8"></div>
<div class="a" style="left:333px;top:506.5px;width:1189px;height:7px;background:#b9bcc7;border-radius:4px"></div>
<svg class="a" style="left:323px;top:505px" width="6" height="10"><path d="M4.5,2 L1.5,5 L4.5,8 Z" fill="#b5b8c4"/></svg>
<svg class="a" style="left:1833px;top:505px" width="6" height="10"><path d="M1.5,2 L4.5,5 L1.5,8 Z" fill="#b5b8c4"/></svg>
<div class="a" style="left:321px;top:515px;width:1530px;height:1px;background:#e3e4ec"></div>
<svg class="a" style="left:337px;top:533px" width="10" height="11" viewBox="0 0 10 11"><rect x="1.2" y="1" width="1.3" height="8" fill="#666"/><path d="M8.5,1 V9 L3,5 Z" fill="#666"/></svg>
<svg class="a" style="left:370px;top:533px" width="8" height="11" viewBox="0 0 8 11"><path d="M6.8,1 V9 L1.5,5 Z" fill="#666"/></svg>
<div class="a" style="left:389px;top:522px;width:31px;height:31px;background:#cfd2f0;color:#3a46d6;line-height:31px;text-align:center;font-size:12px">1</div>
<svg class="a" style="left:431px;top:533px" width="8" height="11" viewBox="0 0 8 11"><path d="M1.5,1 V9 L6.8,5 Z" fill="#666"/></svg>
<svg class="a" style="left:460px;top:533px" width="10" height="11" viewBox="0 0 10 11"><path d="M1.5,1 V9 L7,5 Z" fill="#666"/><rect x="7.5" y="1" width="1.3" height="8" fill="#666"/></svg>
<div class="t" style="left:495px;top:530px;color:#333">Page</div>
<div class="a" style="left:532px;top:522px;width:65px;height:31px;border:1px solid #e0e3f0;border-radius:4px;background:#f8f8fb"></div>
<div class="t" style="left:543px;top:530px;color:#333">1</div>
<div class="t" style="left:604px;top:530px;color:#333">of 1</div>
<div class="a" style="left:638px;top:522px;width:65px;height:31px;border:1px solid #e0e3f0;border-radius:4px;background:#f8f8fb"></div>
<div class="a" style="left:675px;top:523px;width:27px;height:29px;background:#e8ecfb;border-radius:0 4px 4px 0"></div>
<div class="t" style="left:648px;top:530px;color:#333">20</div>
<svg class="a" style="left:684px;top:534px" width="9" height="7"><path d="M0.5,0.5 H8.5 L4.5,6.5 Z" fill="#2f3fd8"/></svg>
<div class="t" style="left:710px;top:530px;color:#333">items per page</div>
<div class="t" style="left:1720px;top:530px;color:#333;word-spacing:-0.6px">1 - 5 of 5 items</div>
<svg class="a" style="left:1823px;top:529px" width="17" height="17" viewBox="0 0 17 17"><path d="M13.6,9.5 A5.6,5.6 0 1 1 9.5,4.2" stroke="#222" stroke-width="1.9" fill="none"/><path d="M8.6,1 L13.2,4.2 L8.6,7.4 Z" fill="#222"/></svg>
</div>
</body></html>
